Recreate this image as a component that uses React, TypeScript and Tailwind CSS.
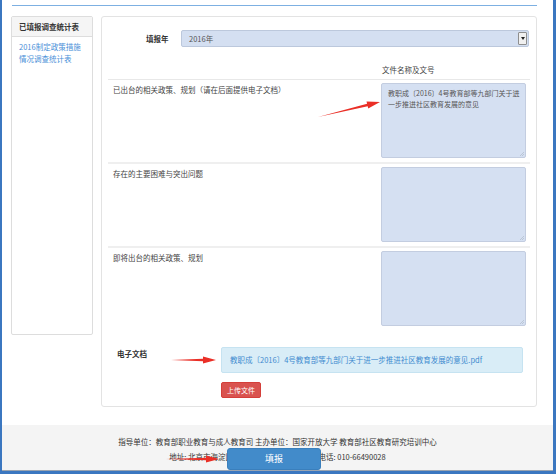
import React from 'react';

// tapered red arrow, drawn from tail to tip
function arrowPoints(tx: number, ty: number, px: number, py: number, head = 13, hw = 3.6, sw = 1.3) {
  const len = Math.hypot(px - tx, py - ty);
  const dx = (px - tx) / len;
  const dy = (py - ty) / len;
  const nx = -dy;
  const ny = dx;
  const bx = px - dx * head;
  const by = py - dy * head;
  const pts = [
    [tx, ty],
    [bx + nx * sw, by + ny * sw],
    [bx + nx * hw, by + ny * hw],
    [px, py],
    [bx - nx * hw, by - ny * hw],
    [bx - nx * sw, by - ny * sw],
  ];
  return pts.map(p => p.map(v => v.toFixed(1)).join(',')).join(' ');
}

const ARROWS = [
  { t: [318, 117], p: [380, 102] },
  { t: [171, 360], p: [216, 360] },
  { t: [166, 459], p: [219, 459] },
];

const ROWS = [
  { label: '已出台的相关政策、规划（请在后面提供电子文档）', value: '教职成〔2016〕4号教育部等九部门关于进一步推进社区教育发展的意见' },
  { label: '存在的主要困难与突出问题', value: '' },
  { label: '即将出台的相关政策、规划', value: '' },
];

export default function App() {
  return (
    <div className="relative w-[556px] h-[474px] overflow-hidden bg-white border-l-2 border-r-[3px] border-b-[3px] border-[#3b77c0] font-['Noto_Sans_CJK_SC','Noto_Sans',sans-serif] text-[7.5px] text-[#333]">
      <div className="flex flex-col h-full">
        {/* top rule */}
        <div className="mt-[5px] ml-[10px] w-[525px] h-px bg-[#7db0e2]" />

        <div className="flex items-start gap-[8px] ml-[9px] mt-[10px]">
          {/* Sidebar */}
          <div className="w-[82px] h-[319px] border border-[#dddddd] rounded-[2px] bg-white">
            <div className="h-[20px] flex items-center pl-[7px] bg-[#f5f5f5] border-b border-[#dddddd] font-bold text-[#333]">
              已填报调查统计表
            </div>
            <div className="pl-[7px] pt-[4px] leading-[12px] text-[#4a8fd8]">
              2016制定政策措施<br />情况调查统计表
            </div>
          </div>

          {/* Main panel */}
          <div className="w-[436px] border border-[#e3e3e3] rounded-[3px] bg-white px-[6px] pt-[13px] pb-[8px]">
            <div className="flex items-center h-[17px]">
              <div className="w-[73px] pl-[38px] font-bold">填报年</div>
              <div className="flex items-center w-[348px] h-[17px] bg-[#d4dff1] border border-[#bcc8dc] rounded-[2px]">
                <span className="flex-1 pl-[7px] text-[#555]">2016年</span>
                <div className="w-[9px] h-[13px] mr-px flex items-center justify-center bg-[#f0f0f0] border border-[#8e8e8e] rounded-[1px]">
                  <div className="w-0 h-0 border-l-[2.5px] border-r-[2.5px] border-t-[3px] border-l-transparent border-r-transparent border-t-[#222]" />
                </div>
              </div>
            </div>

            <div className="flex mt-[18px] pb-[5px] border-b border-[#e8e8e8] leading-[9px]">
              <div className="flex-1" />
              <div className="w-[145px] mr-[4px] pl-px text-[#444]">文件名称及文号</div>
            </div>

            {ROWS.map((r, i) => (
              <div key={i} className={`flex pt-[3px] pb-[4px] ${i > 0 ? 'border-t-2 border-[#efefef]' : ''}`}>
                <div className="flex-1 pl-[5px] mt-[2px] leading-[9px] text-[#444]">{r.label}</div>
                <div className="relative w-[145px] h-[75px] mr-[4px]">
                  <textarea
                    readOnly
                    value={r.value}
                    className="block w-full h-full resize-none bg-[#d5e0f2] border border-[#c3cde0] rounded-[2px] pl-[6px] pr-0 pt-[4px] text-[7px] leading-[11px] text-[#555] font-['Noto_Sans_CJK_SC',sans-serif] outline-none"
                  />
                  <svg className="absolute right-[2px] bottom-[2px] w-[5px] h-[5px]" viewBox="0 0 5 5">
                    <path d="M1 5 L5 1 M3 5 L5 3" stroke="#a9b3c2" strokeWidth="0.6" />
                  </svg>
                </div>
              </div>
            ))}

            {/* Electronic docs */}
            <div className="flex mt-[17px]">
              <div className="w-[113px] pl-[9px] pt-[2px] font-bold leading-[9px]">电子文档</div>
              <div className="w-[302px]">
                <div className="h-[26px] flex items-center pl-[8px] bg-[#d9edf7] border border-[#c6e3f1] rounded-[2px] text-[#3f8bcf]">
                  教职成〔2016〕4号教育部等九部门关于进一步推进社区教育发展的意见.pdf
                </div>
                <div className="mt-[9px] w-[40px] h-[16px] flex items-center justify-center bg-[#d9534f] border border-[#d43f3a] rounded-[2px] text-white text-[7px]">
                  上传文件
                </div>
              </div>
            </div>
          </div>
        </div>

        {/* Footer */}
        <div className="flex-1 mt-[18px] bg-[#f4f4f4] border-b border-[#9aa4b0] pt-[9px] text-center leading-[15px] text-[#333]">
          <div>指导单位：教育部职业教育与成人教育司 主办单位：国家开放大学 教育部社区教育研究培训中心</div>
          <div>地址: 北京市海淀区复兴路75号 邮编: 100039 电话: 010-66490028</div>
        </div>
      </div>

      {/* floating submit button */}
      <div className="absolute left-[225px] top-[448px] w-[94px] h-[22px] flex items-center justify-center bg-[#428bca] border border-[#3a7fbc] rounded-[3px] text-white text-[9px]">
        填报
      </div>

      <svg className="absolute left-[-2px] top-0 w-[556px] h-[474px] pointer-events-none" viewBox="0 0 556 474">
        {ARROWS.map((a, i) => (
          <polygon key={i} points={arrowPoints(a.t[0], a.t[1], a.p[0], a.p[1])} fill="#ea2f27" />
        ))}
      </svg>
    </div>
  );
}
